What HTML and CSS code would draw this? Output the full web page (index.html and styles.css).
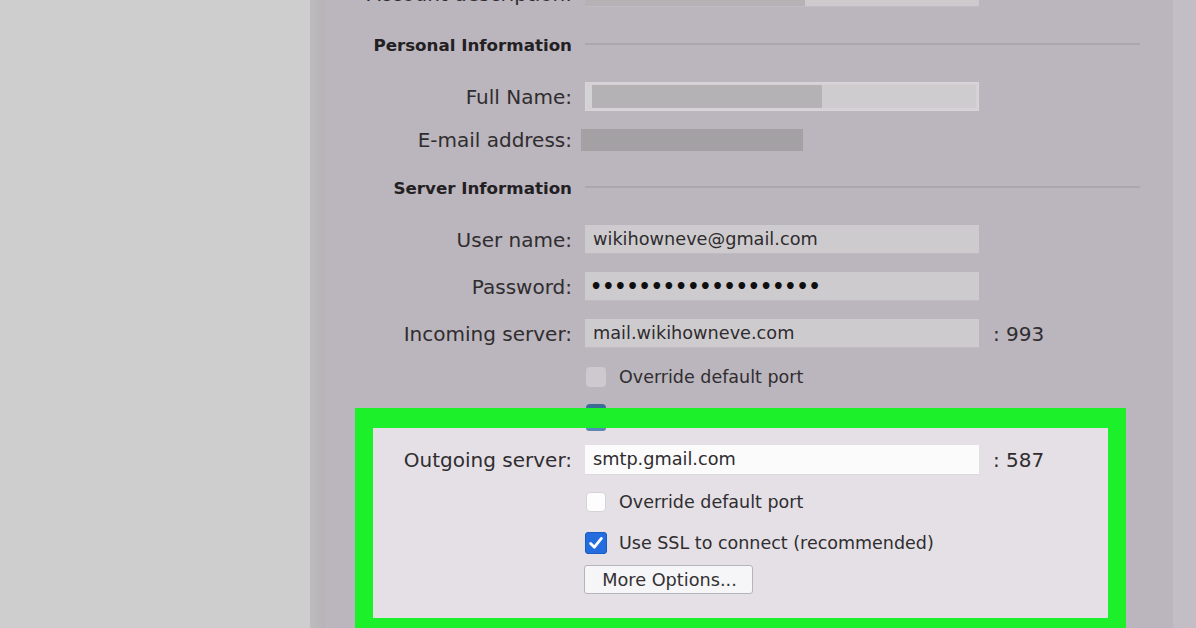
FILE: index.html
```html
<!DOCTYPE html>
<html>
<head>
<meta charset="utf-8">
<link rel="stylesheet" href="styles.css">
</head>
<body>
<div class="sidebar"></div>
<div class="divider"></div>
<main class="panel">
  <div class="content">
    <div class="row account">
      <div class="label">Account description:</div>
      <div class="field split"><span class="blur-a"></span><span class="blur-b"></span></div>
    </div>

    <div class="heading h1">
      <div class="heading-text">Personal Information</div>
      <div class="rule"></div>
    </div>

    <div class="row">
      <div class="label">Full Name:</div>
      <div class="field framed"><span class="blur-c"></span><span class="blur-d"></span></div>
    </div>

    <div class="row email">
      <div class="label">E-mail address:</div>
      <div class="email-bar"></div>
    </div>

    <div class="heading h2">
      <div class="heading-text">Server Information</div>
      <div class="rule"></div>
    </div>

    <div class="row">
      <div class="label">User name:</div>
      <div class="field">wikihowneve@gmail.com</div>
    </div>

    <div class="row gap18">
      <div class="label">Password:</div>
      <div class="field dots">•••••••••••••••••••</div>
    </div>

    <div class="row gap18">
      <div class="label">Incoming server:</div>
      <div class="field">mail.wikihowneve.com</div>
      <div class="port">: 993</div>
    </div>

    <div class="row check-row gap19">
      <div></div>
      <label class="check"><span class="box"></span>Override default port</label>
    </div>

    <div class="row peek-row">
      <div></div>
      <div class="peek"></div>
    </div>

    <section class="highlight">
      <div class="row-in peek-in-row">
        <div></div>
        <div class="peek-in"></div>
      </div>

      <div class="row-in outgoing">
        <div class="label">Outgoing server:</div>
        <div class="field white">smtp.gmail.com</div>
        <div class="port">: 587</div>
      </div>

      <div class="row-in check-row gap17">
        <div></div>
        <label class="check"><span class="box white-box"></span>Override default port</label>
      </div>

      <div class="row-in check-row gap20">
        <div></div>
        <label class="check"><span class="box checked"><svg viewBox="0 0 20 20" width="20" height="20"><path d="M4.6 10.4 L8.4 14.2 L15.4 5.4" fill="none" stroke="#ffffff" stroke-width="2.8" stroke-linecap="round" stroke-linejoin="round"/></svg></span>Use SSL to connect (recommended)</label>
      </div>

      <div class="row-in button-row">
        <div></div>
        <div><button class="btn">More Options...</button></div>
      </div>
    </section>
  </div>
</main>
<div class="rightstrip"></div>
</body>
</html>
```

FILE: styles.css
```css
html, body {
  margin: 0;
  padding: 0;
  height: 628px;
  overflow: hidden;
}

body {
  display: flex;
  font-family: "DejaVu Sans", "Liberation Sans", sans-serif;
  background: #cdcdcd;
}

.sidebar {
  flex: 0 0 310px;
  background: #cecece;
}

.divider {
  flex: 0 0 15px;
  background: linear-gradient(to right, #bdbcbd, #b7b3b8);
}

.panel {
  flex: 0 0 848px;
  box-sizing: border-box;
  background: #bbb5bd;
  padding-right: 33px;
  overflow: hidden;
}

.rightstrip {
  flex: 0 0 23px;
  background: #c3bdc5;
}

.content {
  margin-top: -20px;
}

.row {
  display: grid;
  grid-template-columns: 247px 394px 1fr;
  column-gap: 13px;
  align-items: center;
  height: 29px;
}

.row-in {
  display: grid;
  grid-template-columns: 199px 394px 1fr;
  column-gap: 13px;
  align-items: center;
  height: 29px;
}

.account {
  height: 27px;
}

.label {
  text-align: right;
  white-space: nowrap;
  font-size: 20px;
  color: #2f2d2f;
}

.heading {
  display: grid;
  grid-template-columns: 247px 1fr;
  column-gap: 13px;
  align-items: center;
  height: 75px;
}

.heading-text {
  text-align: right;
  white-space: nowrap;
  font-size: 16.7px;
  font-weight: bold;
  color: #222022;
}

.rule {
  height: 2px;
  background: #aca6ae;
  margin-top: -2px;
}

.field {
  box-sizing: border-box;
  height: 29px;
  background: #cecbcf;
  border-bottom: 1px solid #bfbbc1;
  padding-left: 8px;
  font-size: 17.7px;
  line-height: 28px;
  color: #2e2c2e;
  white-space: nowrap;
  overflow: hidden;
}

.field.split {
  display: flex;
  padding-left: 0;
  height: 27px;
}

.blur-a {
  flex: 0 0 220px;
  background: #b5b2b6;
}

.blur-b {
  flex: 1;
  background: #cdcacd;
}

.field.framed {
  display: flex;
  padding: 2px;
  background: #d5d2d6;
  border: 1px solid #d9d6da;
}

.blur-c {
  flex: 0 0 230px;
  margin-left: 4px;
  background: #b4b2b4;
}

.blur-d {
  flex: 1;
  background: #cfcccf;
}

.email {
  margin-top: 17px;
  height: 22px;
}

.email-bar {
  width: 222px;
  height: 22px;
  margin-left: -4px;
  background: #a4a1a5;
}

.gap18 { margin-top: 18px; }
.gap19 { margin-top: 19px; }
.gap17 { margin-top: 17px; }
.gap20 { margin-top: 20px; }

.dots {
  font-size: 19px;
  font-weight: bold;
  color: #0f0f0f;
  line-height: 28px;
  padding-left: 5px;
}

.port {
  font-size: 20px;
  color: #2f2d2f;
  margin-left: 1px;
  white-space: nowrap;
}

.check-row {
  height: 20px;
}

.check {
  display: flex;
  align-items: center;
  gap: 13px;
  font-size: 17.5px;
  color: #2f2d2f;
  white-space: nowrap;
}

.box {
  flex: 0 0 20px;
  width: 20px;
  height: 20px;
  box-sizing: border-box;
  border-radius: 4px;
  background: #cdc9ce;
  margin-left: 1px;
  display: flex;
}

.box.white-box {
  background: #fdfdfd;
  border: 1px solid #d6d3d8;
}

.box.checked {
  width: 22px;
  height: 22px;
  flex-basis: 22px;
  margin-left: 0;
  margin-right: -1px;
  background: #236ddf;
  box-shadow: inset 0 0 0 1px #1b5cc4;
}

.box.checked svg {
  margin: 1px;
}

.peek-row {
  height: 4px;
  margin-top: 17px;
}

.peek {
  width: 20px;
  height: 4px;
  margin-left: 1px;
  border-radius: 4px 4px 0 0;
  background: #3a6b94;
}

.highlight {
  box-sizing: border-box;
  width: 771px;
  margin-left: 30px;
  border: 20px solid #1cf02b;
  border-left-width: 18px;
  border-right-width: 18px;
  background: #e4e0e6;
  padding-bottom: 24px;
}

.peek-in-row {
  height: 3px;
}

.peek-in {
  width: 20px;
  height: 3px;
  margin-left: 1px;
  border-radius: 0 0 4px 4px;
  background: #5d87b3;
}

.outgoing {
  margin-top: 14px;
  height: 30px;
}

.field.white {
  height: 30px;
  background: #fbfbfc;
  border-bottom: 1px solid #dcd9de;
  line-height: 29px;
}

.button-row {
  margin-top: 13px;
}

.btn {
  box-sizing: border-box;
  width: 169px;
  height: 29px;
  margin-left: -1px;
  background: #f6f5f7;
  border: 1px solid #b7b4b9;
  border-radius: 3px;
  font-family: "DejaVu Sans", "Liberation Sans", sans-serif;
  font-size: 17.7px;
  color: #333133;
  padding: 0 0 0 2px;
  text-align: center;
}
```
